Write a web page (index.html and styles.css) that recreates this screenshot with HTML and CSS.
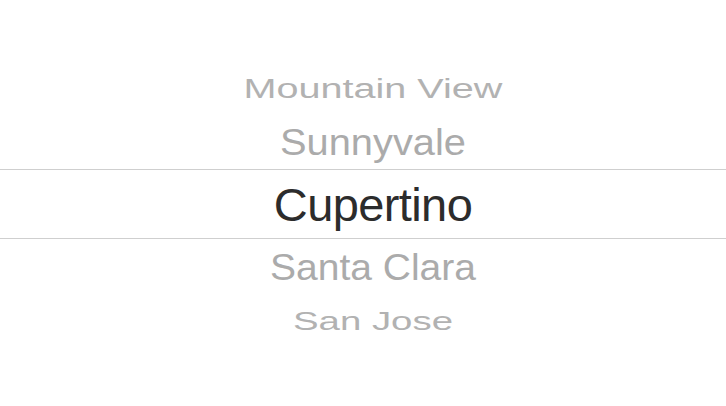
FILE: index.html
```html
<!DOCTYPE html>
<html>
<head>
<meta charset="utf-8">
<link rel="stylesheet" href="styles.css">
</head>
<body>
<div class="picker">
  <div class="row far-top"><span class="label">Mountain View</span></div>
  <div class="row near-top"><span class="label">Sunnyvale</span></div>
  <div class="row selected"><span class="label">Cupertino</span></div>
  <div class="row near-bottom"><span class="label">Santa Clara</span></div>
  <div class="row far-bottom"><span class="label">San Jose</span></div>
</div>
</body>
</html>
```
FILE: styles.css
```css
html, body {
  margin: 0;
  padding: 0;
  background: #ffffff;
}
.picker {
  width: 726px;
  height: 406px;
  display: flex;
  flex-direction: column;
  padding-top: 61px;
  box-sizing: border-box;
  font-family: "Liberation Sans", Arial, sans-serif;
}
.row {
  display: flex;
  align-items: center;
  justify-content: center;
  padding-left: 20px;
  color: #ababab;
  white-space: nowrap;
}
.label {
  display: inline-block;
}
.far-top {
  height: 54px;
  font-size: 39.6px;
  color: #b2b2b2;
}
.far-top .label {
  transform: scaleY(0.7);
}
.near-top {
  height: 54px;
  font-size: 39.8px;
}
.near-top .label {
  transform: scaleY(0.91);
}
.selected {
  height: 68px;
  border-top: 1px solid #cfcfcf;
  border-bottom: 1px solid #cfcfcf;
  color: #2c2c2c;
  font-size: 47px;
  letter-spacing: -0.6px;
}
.near-bottom {
  height: 58px;
  font-size: 39px;
}
.near-bottom .label {
  transform: scaleY(0.93);
}
.far-bottom {
  height: 48px;
  font-size: 38.4px;
  color: #b2b2b2;
}
.far-bottom .label {
  transform: scaleY(0.67);
}
```
